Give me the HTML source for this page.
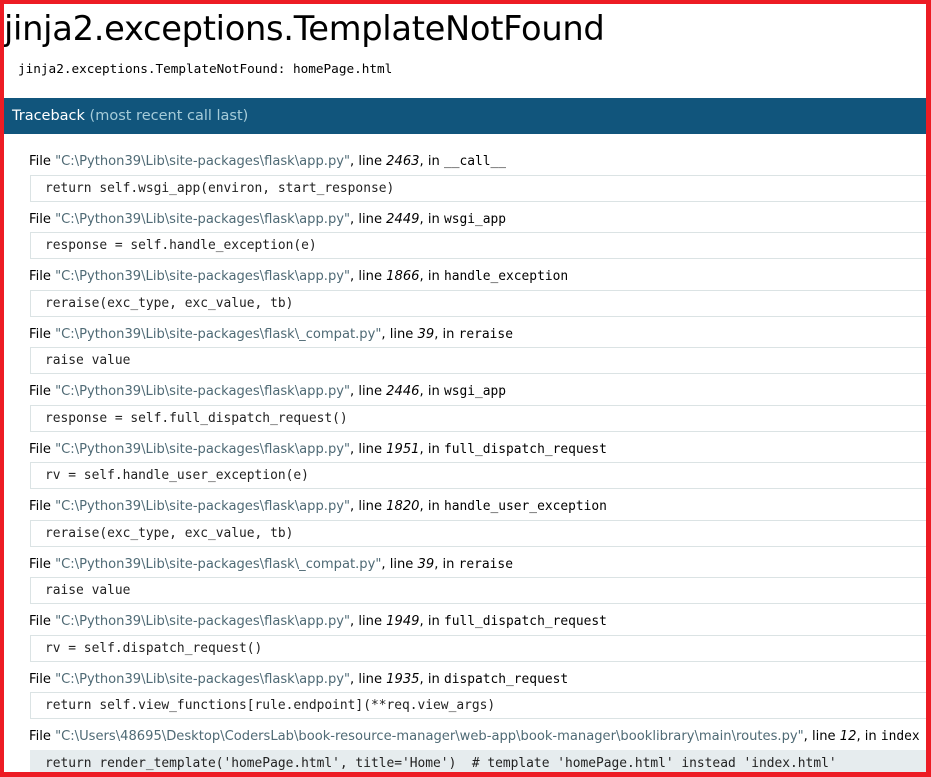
<!DOCTYPE html>
<html><head><meta charset="utf-8"><style>
body{margin:0;width:931px;height:777px;overflow:hidden;background:#ed1c24;position:relative;font-family:"DejaVu Sans","Liberation Sans",sans-serif}
#pg{position:absolute;left:4px;top:4px;width:922px;height:768px;background:#fff;overflow:hidden}
h1{position:absolute;left:0;top:5px;margin:0;font-weight:normal;font-size:33.7px;color:#000;white-space:nowrap;letter-spacing:-0.3px}
.err{position:absolute;left:14px;top:57px;font-family:"DejaVu Sans Mono","Liberation Mono",monospace;font-size:12.7px;color:#000}
.tb{position:absolute;left:0;top:94px;width:922px;height:36px;background:#11557c;color:#fff;font-size:14.5px;line-height:36px;padding-left:8px;box-sizing:border-box}
.tb span{color:#a6ccd9}
.f{position:absolute;left:25px;font-size:13.1px;color:#000;white-space:nowrap;height:16px;line-height:16px}
.f .fn{color:#4f6a75}
.f i{font-style:italic}
.f .m{font-family:"DejaVu Sans Mono","Liberation Mono",monospace;font-size:12.9px}
.c{position:absolute;left:26px;width:920px;height:25px;border:1px solid #dbe3e4;border-right:0;font-family:"DejaVu Sans Mono","Liberation Mono",monospace;font-size:12.9px;line-height:25px;padding-left:14px;white-space:pre;color:#222;box-sizing:content-box}
.c.h{background:#e6ecee;border-color:#e6ecee}
</style></head><body><div id="pg">
<h1>jinja2.exceptions.TemplateNotFound</h1>
<div class="err">jinja2.exceptions.TemplateNotFound: homePage.html</div>
<div class="tb">Traceback <span>(most recent call last)</span></div>

<div class="f" style="top:150px">File <span class="fn">"C:\Python39\Lib\site-packages\flask\app.py"</span>, line <i>2463</i>, in <span class="m">__call__</span></div>
<div class="c" style="top:171px">return self.wsgi_app(environ, start_response)</div>

<div class="f" style="top:208px">File <span class="fn">"C:\Python39\Lib\site-packages\flask\app.py"</span>, line <i>2449</i>, in <span class="m">wsgi_app</span></div>
<div class="c" style="top:228px">response = self.handle_exception(e)</div>

<div class="f" style="top:265px">File <span class="fn">"C:\Python39\Lib\site-packages\flask\app.py"</span>, line <i>1866</i>, in <span class="m">handle_exception</span></div>
<div class="c" style="top:286px">reraise(exc_type, exc_value, tb)</div>

<div class="f" style="top:323px">File <span class="fn">"C:\Python39\Lib\site-packages\flask\_compat.py"</span>, line <i>39</i>, in <span class="m">reraise</span></div>
<div class="c" style="top:343px">raise value</div>

<div class="f" style="top:380px">File <span class="fn">"C:\Python39\Lib\site-packages\flask\app.py"</span>, line <i>2446</i>, in <span class="m">wsgi_app</span></div>
<div class="c" style="top:401px">response = self.full_dispatch_request()</div>

<div class="f" style="top:438px">File <span class="fn">"C:\Python39\Lib\site-packages\flask\app.py"</span>, line <i>1951</i>, in <span class="m">full_dispatch_request</span></div>
<div class="c" style="top:458px">rv = self.handle_user_exception(e)</div>

<div class="f" style="top:495px">File <span class="fn">"C:\Python39\Lib\site-packages\flask\app.py"</span>, line <i>1820</i>, in <span class="m">handle_user_exception</span></div>
<div class="c" style="top:516px">reraise(exc_type, exc_value, tb)</div>

<div class="f" style="top:553px">File <span class="fn">"C:\Python39\Lib\site-packages\flask\_compat.py"</span>, line <i>39</i>, in <span class="m">reraise</span></div>
<div class="c" style="top:573px">raise value</div>

<div class="f" style="top:610px">File <span class="fn">"C:\Python39\Lib\site-packages\flask\app.py"</span>, line <i>1949</i>, in <span class="m">full_dispatch_request</span></div>
<div class="c" style="top:631px">rv = self.dispatch_request()</div>

<div class="f" style="top:668px">File <span class="fn">"C:\Python39\Lib\site-packages\flask\app.py"</span>, line <i>1935</i>, in <span class="m">dispatch_request</span></div>
<div class="c" style="top:688px">return self.view_functions[rule.endpoint](**req.view_args)</div>

<div class="f" style="top:725px">File <span class="fn">"C:\Users\48695\Desktop\CodersLab\book-resource-manager\web-app\book-manager\booklibrary\main\routes.py"</span>, line <i>12</i>, in <span class="m">index</span></div>
<div class="c h" style="top:746px">return render_template('homePage.html', title='Home')  # template 'homePage.html' instead 'index.html'</div>
</div></body></html>
